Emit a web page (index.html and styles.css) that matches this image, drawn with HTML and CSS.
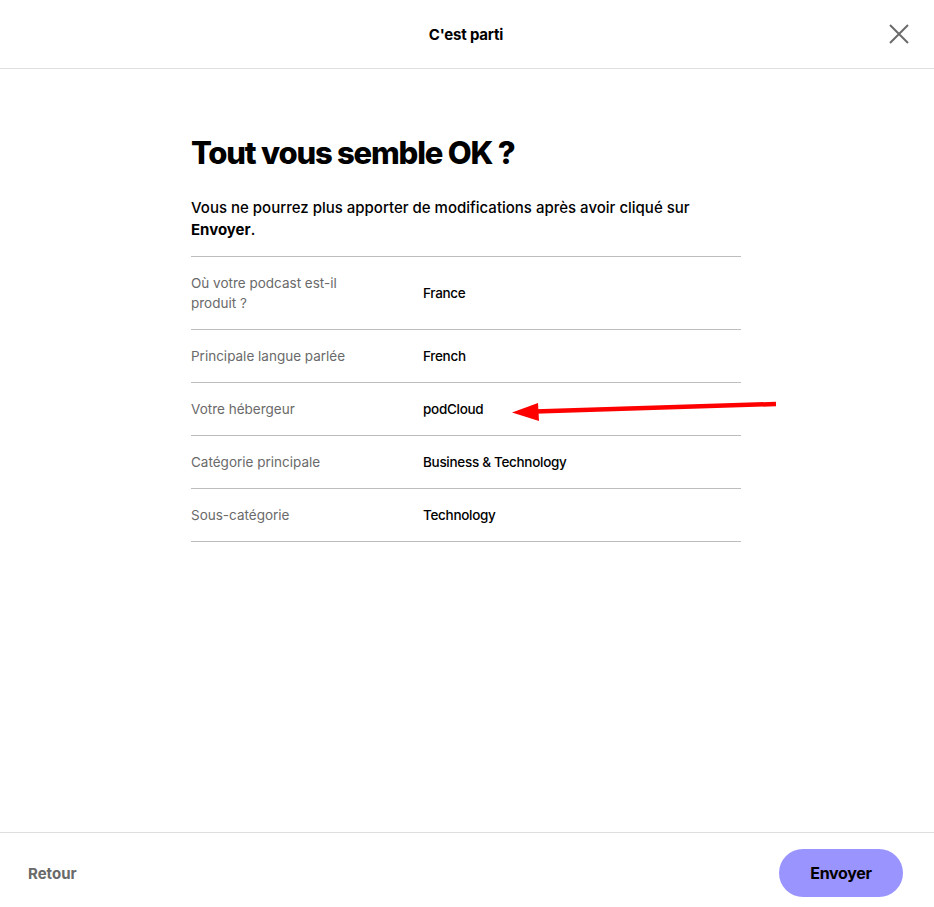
FILE: index.html
```html
<!DOCTYPE html>
<html lang="fr">
<head>
<meta charset="utf-8">
<title>C'est parti</title>
<link rel="stylesheet" href="styles.css">
</head>
<body>
<div class="modal">
  <header class="topbar">
    <span class="topbar-title">C'est parti</span>
    <button class="close" aria-label="Fermer">
      <svg width="20" height="20" viewBox="0 0 20 20"><path d="M1 1L19 19M19 1L1 19" stroke="#6b6b6b" stroke-width="2" fill="none"/></svg>
    </button>
  </header>
  <main class="content">
    <div class="column">
      <h1 class="heading">Tout vous semble OK ?</h1>
      <p class="intro">Vous ne pourrez plus apporter de modifications après avoir cliqué sur <strong>Envoyer</strong>.</p>
      <dl class="summary">
        <div class="row"><dt>Où votre podcast est-il produit ?</dt><dd>France</dd></div>
        <div class="row"><dt>Principale langue parlée</dt><dd>French</dd></div>
        <div class="row"><dt>Votre hébergeur</dt><dd>podCloud</dd></div>
        <div class="row"><dt>Catégorie principale</dt><dd>Business &amp; Technology</dd></div>
        <div class="row"><dt>Sous-catégorie</dt><dd>Technology</dd></div>
      </dl>
    </div>
  </main>
  <footer class="bottombar">
    <button class="back">Retour</button>
    <button class="submit">Envoyer</button>
  </footer>
  <svg class="annotation" width="934" height="907" viewBox="0 0 934 907">
    <path d="M776 404L535 411.5" stroke="#ff0000" stroke-width="4.5" fill="none"/>
    <path d="M512 412.5L538 403L539 421Z" fill="#ff0000"/>
  </svg>
</div>
</body>
</html>
```
FILE: styles.css
```css
* { box-sizing: border-box; }
html, body { margin: 0; padding: 0; background: #fff; }
body { font-family: "Inter", "Liberation Sans", sans-serif; color: #000; }
.modal {
  position: relative;
  width: 934px;
  height: 907px;
  display: flex;
  flex-direction: column;
}
.topbar {
  height: 69px;
  border-bottom: 1px solid #dedede;
  display: flex;
  align-items: center;
  justify-content: center;
  position: relative;
}
.topbar-title {
  font-size: 15px;
  font-weight: 700;
  letter-spacing: -0.2px;
  margin-right: 2px;
}
.close {
  position: absolute;
  right: 25px;
  top: 24px;
  width: 20px;
  height: 20px;
  padding: 0;
  border: 0;
  background: none;
  display: flex;
}
.content {
  flex: 1;
  display: flex;
  justify-content: center;
}
.column {
  width: 550px;
  margin-right: 2px;
  padding-top: 64px;
}
.heading {
  margin: 0;
  font-size: 31px;
  font-weight: 800;
  letter-spacing: -1.2px;
  line-height: 40px;
}
.intro {
  margin: 24px 0 15px;
  max-width: 520px;
  font-size: 15px;
  line-height: 22px;
  font-weight: 500;
  letter-spacing: 0;
}
.intro strong { font-weight: 700; }
.summary {
  margin: 0;
  border-top: 1px solid #bdbdbd;
}
.row {
  display: flex;
  align-items: center;
  min-height: 53px;
  border-bottom: 1px solid #bdbdbd;
  font-size: 13.5px;
  line-height: 20px;
}
.row:first-child { min-height: 73px; padding: 15px 0; }
.row dt {
  width: 232px;
  padding-right: 70px;
  color: #6a6a6a;
  letter-spacing: 0;
}
.row dd {
  margin: 0;
  color: #000;
  font-weight: 500;
  letter-spacing: -0.3px;
}
.bottombar {
  height: 75px;
  border-top: 1px solid #dedede;
  display: flex;
  align-items: center;
  justify-content: space-between;
  padding: 6px 31px 0 28px;
}
.back {
  border: 0;
  background: none;
  padding: 0;
  font-family: inherit;
  font-size: 15px;
  font-weight: 700;
  color: #6a6a6a;
  letter-spacing: 0;
}
.submit {
  width: 124px;
  height: 48px;
  border: 0;
  border-radius: 24px;
  background: #9a94ff;
  font-family: inherit;
  font-size: 16px;
  font-weight: 700;
  color: #000;
  letter-spacing: -0.3px;
}
.annotation {
  position: absolute;
  left: 0;
  top: 0;
  pointer-events: none;
}
```
